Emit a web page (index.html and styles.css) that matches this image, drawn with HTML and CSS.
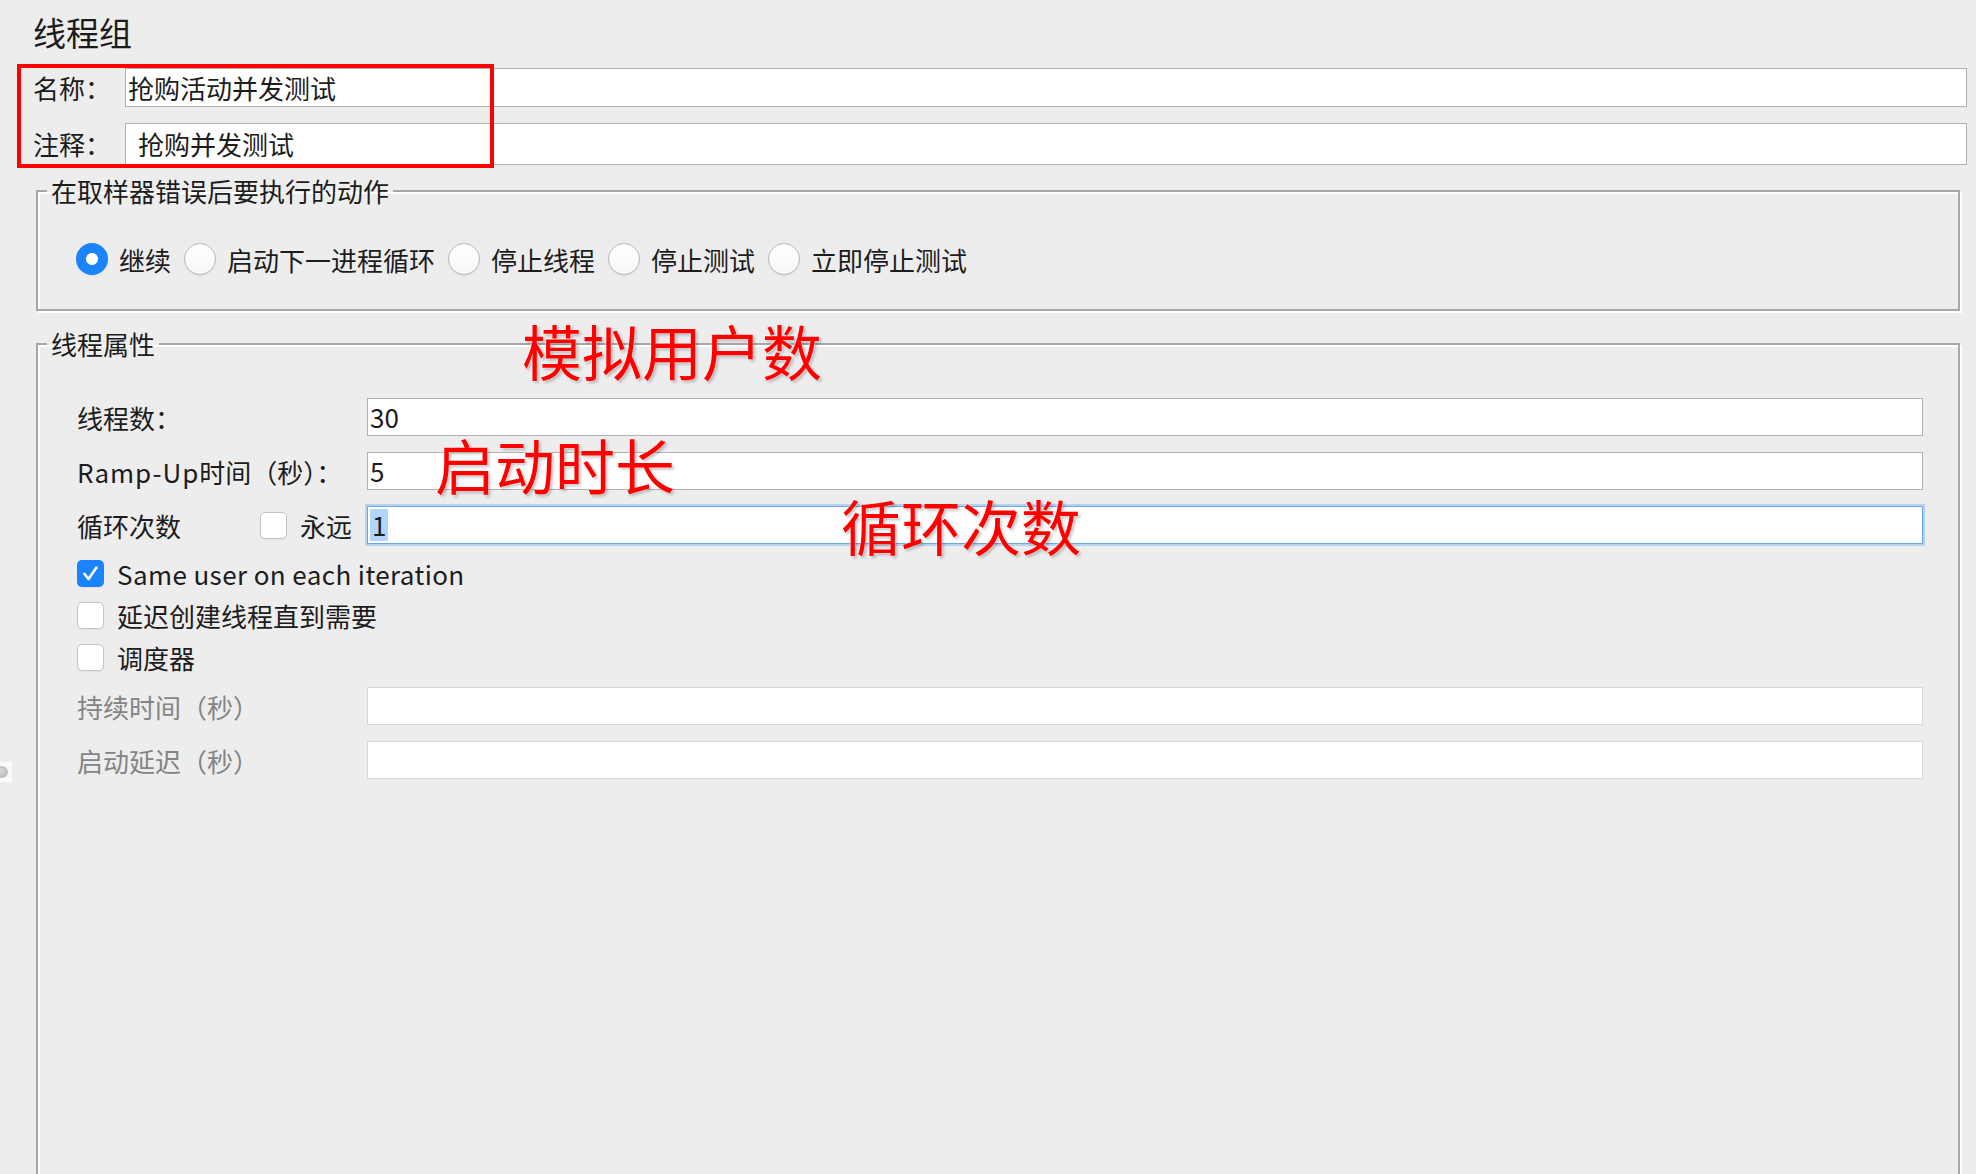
FILE: index.html
```html
<!DOCTYPE html>
<html lang="zh-CN">

<head>
    <meta charset="UTF-8">
    <meta name="viewport" content="width=device-width, initial-scale=1.0">
    <title>线程组</title>
    <link rel="stylesheet" href="styles.css">
</head>

<body>
    <div class="panel">
        <h1 class="title">线程组</h1>

        <div class="top-row">
            <span class="top-label">名称：</span>
            <div class="field">抢购活动并发测试</div>
        </div>
        <div class="top-row">
            <span class="top-label">注释：</span>
            <div class="field tall indent">抢购并发测试</div>
        </div>

        <!-- sampler error action -->
        <fieldset class="group error-group">
            <legend>在取样器错误后要执行的动作</legend>
            <div class="radios">
                <label class="radio-item"><span class="radio on"></span>继续</label>
                <label class="radio-item"><span class="radio"></span>启动下一进程循环</label>
                <label class="radio-item"><span class="radio"></span>停止线程</label>
                <label class="radio-item"><span class="radio"></span>停止测试</label>
                <label class="radio-item"><span class="radio"></span>立即停止测试</label>
            </div>
        </fieldset>

        <!-- thread properties -->
        <fieldset class="group thread-group">
            <legend>线程属性</legend>
            <div class="group-body">
                <div class="form-row">
                    <span class="form-label">线程数：</span>
                    <div class="field">30</div>
                </div>
                <div class="form-row">
                    <span class="form-label"><span class="latin">Ramp-Up</span>时间（秒）：</span>
                    <div class="field">5</div>
                </div>
                <div class="form-row">
                    <div class="form-label loop-label">
                        <span class="loop-text">循环次数</span>
                        <span class="check"></span>
                        <span>永远</span>
                    </div>
                    <div class="field focused"><span class="selected">1</span></div>
                </div>

                <div class="check-row">
                    <span class="check on">
                        <svg viewBox="0 0 27 27" width="27" height="27">
                            <path d="M7.5 14 L11.5 19 L19.5 7.5" fill="none" stroke="#fff" stroke-width="2.6" stroke-linecap="round" stroke-linejoin="round"/>
                        </svg>
                    </span>
                    <span class="same-user">Same user on each iteration</span>
                </div>
                <div class="check-row">
                    <span class="check"></span>
                    <span>延迟创建线程直到需要</span>
                </div>
                <div class="check-row last">
                    <span class="check"></span>
                    <span>调度器</span>
                </div>

                <div class="form-row disabled">
                    <span class="form-label">持续时间（秒）</span>
                    <div class="field"></div>
                </div>
                <div class="form-row disabled">
                    <span class="form-label">启动延迟（秒）</span>
                    <div class="field"></div>
                </div>
            </div>
        </fieldset>
    </div>

    <!-- annotations drawn on top of the screenshot -->
    <div class="mark-box"></div>
    <div class="note note-users">模拟用户数</div>
    <div class="note note-ramp">启动时长</div>
    <div class="note note-loops">循环次数</div>

    <div class="grip"><span class="grip-dot"></span></div>
</body>

</html>
```

FILE: styles.css
```css
/* Base */
html,
body {
    height: 100%;
    overflow: hidden;
}

body {
    margin: 0;
    background-color: #ededed;
    font-family: "Noto Sans CJK SC", "Noto Sans", sans-serif;
    font-size: 26px;
    color: #1c1c1c;
    position: relative;
}

.title {
    margin: 0;
    padding: 12px 0 0 33px;
    font-size: 33px;
    font-weight: normal;
    line-height: 40px;
}

/* Name / comment rows */
.top-row {
    display: flex;
    align-items: center;
    padding: 0 9px 0 33px;
    margin-top: 16px;
}

.top-label {
    width: 92px;
    flex-shrink: 0;
    line-height: 30px;
}

.field {
    flex: 1;
    box-sizing: border-box;
    height: 39px;
    background-color: #fff;
    border: 1px solid #b1b1b1;
    padding-left: 2px;
    line-height: 37px;
    white-space: nowrap;
}

.field.tall {
    height: 42px;
    line-height: 40px;
}

.field.indent {
    padding-left: 12px;
}

/* Etched group boxes */
.group {
    margin: 0 16px 0 36px;
    padding: 0;
    border: 2px solid #a7a7a7;
    box-shadow: inset 2px 2px 0 #fff, 2px 2px 0 #fff;
    min-width: 0;
}

.group legend {
    margin-left: 9px;
    padding: 0 4px;
    line-height: 28px;
}

.error-group {
    margin-top: 12px;
    padding: 38px 0 34px 0;
}

.error-group .radios {
    padding-left: 38px;
}

.thread-group {
    margin-top: 19px;
    padding: 40px 0 600px 0;
}

.group-body {
    padding: 0 35px 0 39px;
}

/* Radio buttons */
.radios {
    display: flex;
    align-items: center;
    height: 32px;
}

.radio-item {
    display: flex;
    align-items: center;
    gap: 11px;
    margin-right: 13px;
    white-space: nowrap;
}

.radio {
    box-sizing: border-box;
    width: 32px;
    height: 32px;
    border-radius: 50%;
    background: linear-gradient(#ffffff, #f7f7f7);
    border: 1px solid #b9b9b9;
    box-shadow: 0 1px 1px rgba(0, 0, 0, 0.08);
    flex-shrink: 0;
}

.radio.on {
    border: none;
    background: #1b83fb radial-gradient(circle, #fff 0, #fff 5.5px, transparent 6.5px);
}

/* Thread property rows */
.form-row {
    display: flex;
    align-items: center;
    height: 38px;
    margin-bottom: 16px;
}

.form-row .field {
    height: 38px;
    line-height: 36px;
}

.form-label {
    width: 290px;
    flex-shrink: 0;
    white-space: nowrap;
}

.latin {
    letter-spacing: 1px;
}

.loop-label {
    display: flex;
    align-items: center;
}

.loop-text {
    width: 183px;
}

.loop-label .check {
    margin-right: 13px;
}

.field.focused {
    border-color: #6aa6ea;
    box-shadow: 0 0 0 2px rgba(140, 190, 245, 0.55);
}

.selected {
    display: inline-block;
    background-color: #b2d5fb;
    padding: 0 2px;
    line-height: 32px;
    vertical-align: top;
    margin-top: 2px;
}

.form-row.disabled {
    color: #848484;
}

.form-row.disabled .field {
    border-color: #d6d6d6;
}

/* Checkboxes */
.check-row {
    display: flex;
    align-items: center;
    gap: 13px;
    height: 27px;
    margin-bottom: 15px;
}

.check-row.last {
    margin-bottom: 16px;
}

.same-user {
    letter-spacing: 0.4px;
}

.check {
    box-sizing: border-box;
    width: 27px;
    height: 27px;
    border-radius: 5px;
    background-color: #fff;
    border: 1px solid #c4c4c4;
    box-shadow: 0 1px 1px rgba(0, 0, 0, 0.05);
    flex-shrink: 0;
}

.check.on {
    border: none;
    background-color: #1b83fb;
}

.check svg {
    display: block;
}

/* Red annotations */
.mark-box {
    position: absolute;
    left: 17px;
    top: 64px;
    width: 477px;
    height: 104px;
    box-sizing: border-box;
    border: 4px solid #ff0000;
}

.note {
    position: absolute;
    font-size: 60px;
    line-height: 60px;
    color: #ff0000;
    white-space: nowrap;
    text-shadow: 0 0 2px #fff, 2px 2px 3px rgba(0, 0, 0, 0.25);
}

.note-users {
    left: 522px;
    top: 320px;
}

.note-ramp {
    left: 435px;
    top: 434px;
}

.note-loops {
    left: 841px;
    top: 495px;
}

/* Splitter handle on the left edge */
.grip {
    position: absolute;
    left: 0;
    top: 762px;
    width: 12px;
    height: 20px;
    background-color: #fafafa;
    overflow: hidden;
}

.grip-dot {
    position: absolute;
    left: -4px;
    top: 4px;
    width: 12px;
    height: 12px;
    border-radius: 50%;
    background: radial-gradient(circle at 40% 40%, #d8d8d8, #b0b0b0);
}
```
